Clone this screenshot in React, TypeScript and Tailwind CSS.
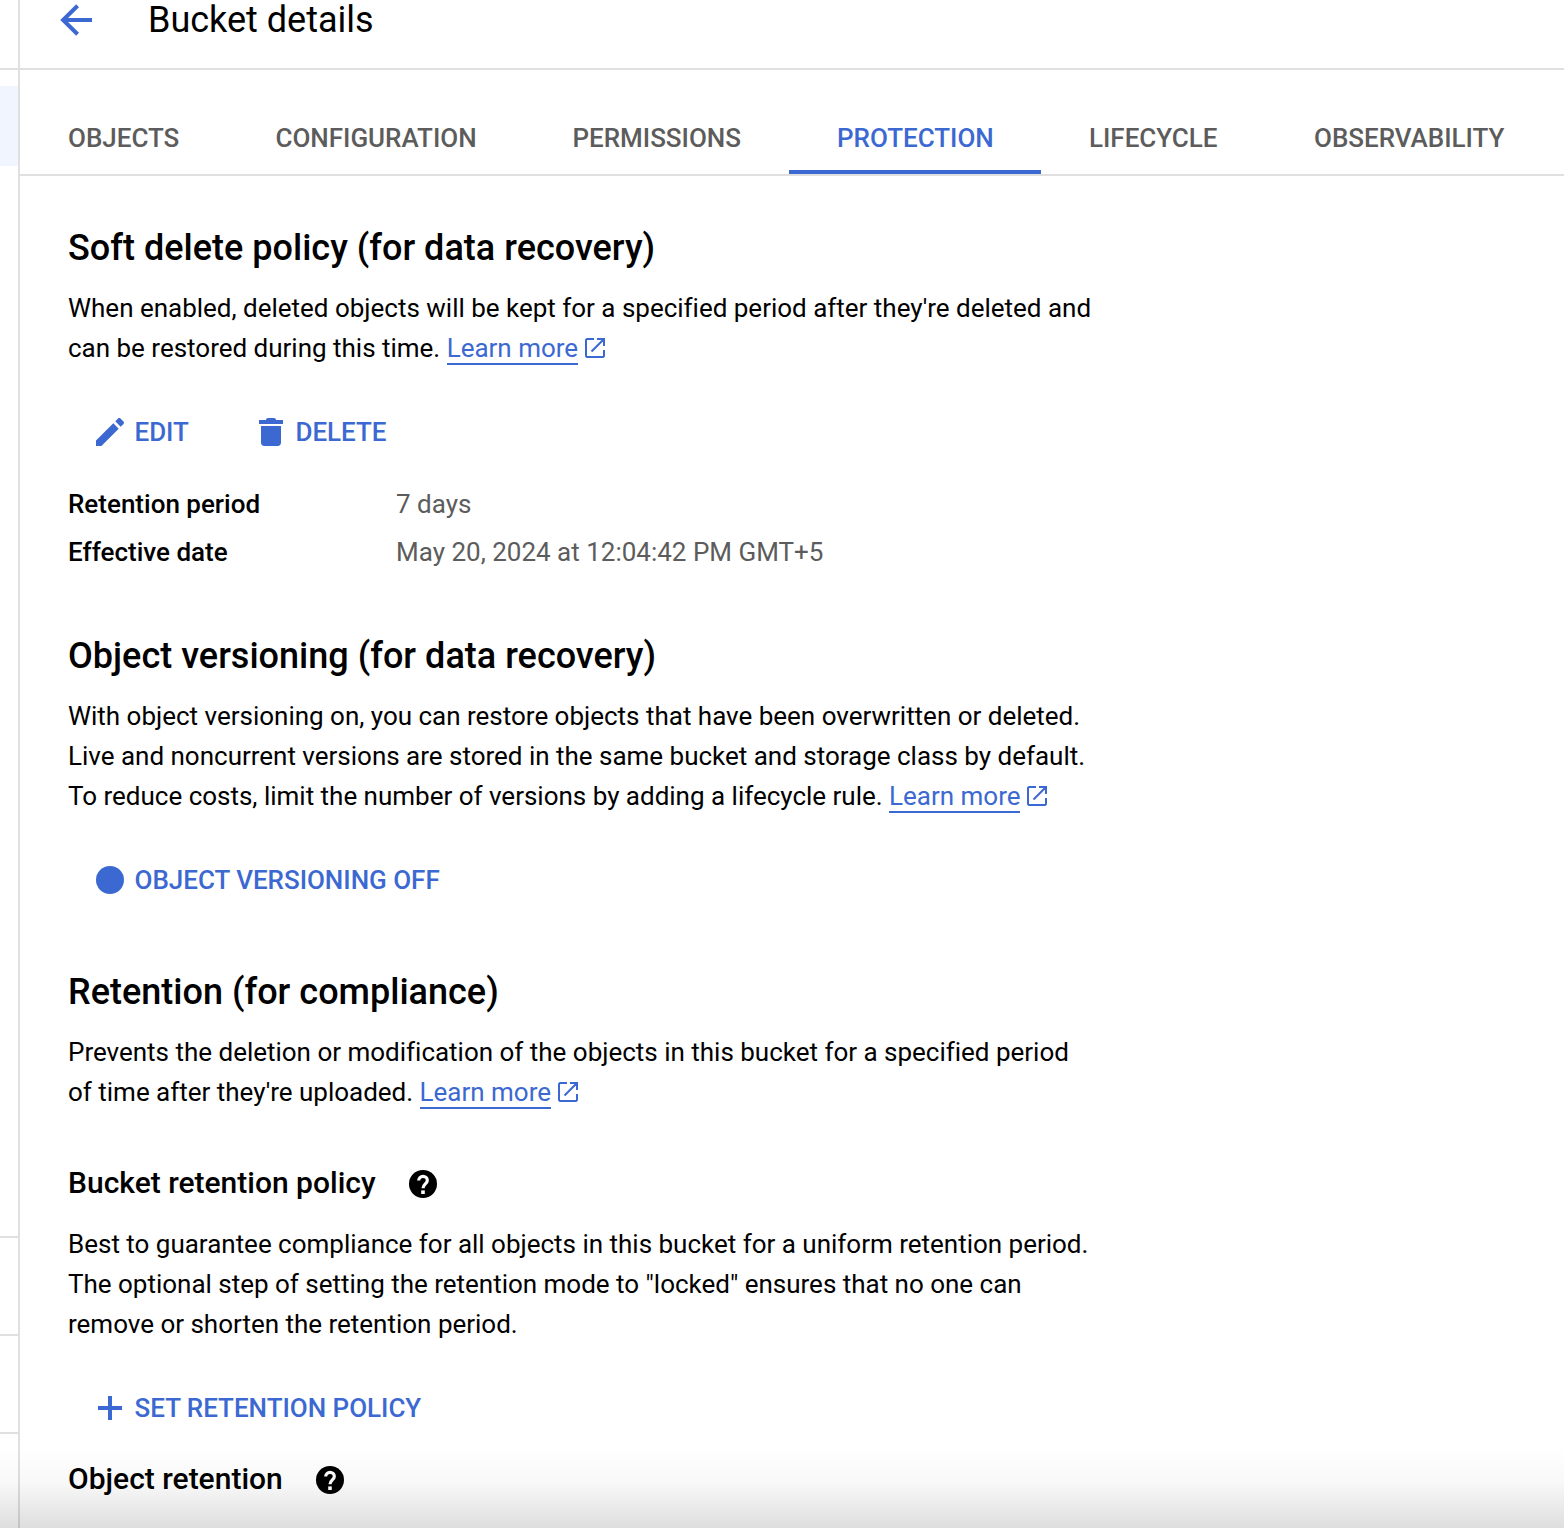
import React from "react";

function BackIcon() {
  return (
    <svg viewBox="0 0 32 32" className="size-8 shrink-0" fill="none" stroke="currentColor" strokeWidth="4">
      <path d="M17.6 1.8L3.1 16l14.5 14.2M3 16h29" />
    </svg>
  );
}

function EditIcon() {
  return (
    <svg viewBox="0 0 18 18" className="ml-6 mr-[6.5px] size-9 shrink-0" fill="currentColor">
      <path d="M2 13.3V16h2.7l8.65-8.65-2.7-2.7zM11.65 3.65l2.7 2.7 1.4-1.4c.33-.33.33-.85 0-1.18l-1.52-1.52c-.33-.33-.85-.33-1.18 0z" />
    </svg>
  );
}

function TrashIcon() {
  return (
    <svg viewBox="0 0 18 18" className="ml-16 mr-[6.5px] size-9 shrink-0" fill="currentColor">
      <path d="M4 6h10v8.4c0 .9-.7 1.6-1.6 1.6H5.6C4.700 16 4 15.300 4 14.400zM3 3h3.500c0-.6.4-1 1-1h3c.6 0 1 .4 1 1H15v2H3z" />
    </svg>
  );
}

function OpenIcon() {
  return (
    <svg viewBox="0 0 20 20" className="ml-[7px] inline-block size-5 align-[-1px]" fill="none" stroke="currentColor" strokeWidth="2">
      <path d="M9 1H2L1 2v16l1 1h16l1-1v-6M12 1h7v7M18.500 1.500L6.500 13.500" />
    </svg>
  );
}

function HelpIcon() {
  return (
    <svg viewBox="0 0 28 28" className="ml-[33px] size-7 shrink-0">
      <circle cx="14" cy="14" r="14" fill="#000" />
      <path d="M9.700 10.600c0-2.500 1.900-4.200 4.300-4.200s4.300 1.700 4.300 4c0 3.400-4.300 3.700-4.300 7.900" fill="none" stroke="#fff" strokeWidth="3.200" />
      <rect x="12.200" y="20.400" width="3.600" height="3.600" fill="#fff" />
    </svg>
  );
}

function PlusIcon() {
  return (
    <svg viewBox="0 0 24 24" className="ml-[30px] mr-[12.5px] size-6 shrink-0" fill="currentColor">
      <path d="M10 0h4v10h10v4H14v10h-4V14H0v-4h10z" />
    </svg>
  );
}

const tabs = [
  ["OBJECTS", "w-[207.5px]"],
  ["CONFIGURATION", "w-[297px]"],
  ["PERMISSIONS", "w-[264.5px]"],
  ["PROTECTION", "w-[252px]"],
  ["LIFECYCLE", "w-[225px]"],
  ["OBSERVABILITY", "w-[286px]"],
];

function LearnMore() {
  return (
    <a className="text-[#3c69d1]">
      <span className="border-b-2 border-[#3c69d1]">Learn more</span>
      <OpenIcon />
    </a>
  );
}

function Title({ children }: { children: React.ReactNode }) {
  return (
    <h2 className="h-12 whitespace-nowrap text-[36px] font-medium leading-[48px] tracking-[0.015px]">{children}</h2>
  );
}

function Para({ children }: { children: React.ReactNode }) {
  return (
    <p className="mt-4 whitespace-nowrap text-[26px] leading-[40px] tracking-[-0.01px]">{children}</p>
  );
}

function Subheading({ children }: { children: React.ReactNode }) {
  return (
    <h3 className="flex h-10 items-center text-[30px] font-medium">
      <span className="pb-1">{children}</span>
      <HelpIcon />
    </h3>
  );
}

function Action({ children, label }: { children: React.ReactNode; label: string }) {
  return (
    <button className="flex h-12 items-center whitespace-nowrap text-[26px] font-medium tracking-[-0.02px] text-[#3c69d1]">
      {children}
      <span>{label}</span>
    </button>
  );
}

export default function App() {
  return (
    <div className="relative flex h-[1528px] w-[1564px] overflow-hidden bg-white font-['Roboto',sans-serif] text-black">
      <aside className="flex w-5 shrink-0 flex-col border-r-2 border-[#e0e0e0]">
        <div className="h-[70px] shrink-0 border-b-2 border-[#e0e0e0]" />
        <div className="mt-4 h-20 shrink-0 bg-[#f0f5ff]" />
        <div className="h-[1072px] shrink-0 border-b-2 border-[#e0e0e0]" />
        <div className="h-[98px] shrink-0 border-b-2 border-[#e0e0e0]" />
        <div className="h-[98px] shrink-0 border-b-2 border-[#e0e0e0]" />
      </aside>
      <main className="flex w-[1544px] flex-col">
        <header className="flex h-[70px] shrink-0 items-center border-b-2 border-[#e0e0e0] pb-[28px] pl-10 text-[#3c69d1]">
          <BackIcon />
          <h1 className="ml-14 text-[36px] leading-[40px] text-black">Bucket details</h1>
        </header>
        <nav className="flex h-[106px] shrink-0 items-end border-b-2 border-[#e0e0e0]">
          {tabs.map(([name, width]) => (
            <div
              key={name}
              className={
                "flex h-[74px] shrink-0 items-center whitespace-nowrap border-b-4 pl-12 pt-1.5 text-[26px] font-medium tracking-[-0.02px] " +
                width +
                (name === "PROTECTION" ? " border-[#3c69d1] text-[#3c69d1]" : " border-transparent text-[#5c5c5c]")
              }
            >
              {name}
            </div>
          ))}
        </nav>
        <div className="flex flex-col pl-12">
          <section className="mt-12 h-[408px]">
            <Title>Soft delete policy (for data recovery)</Title>
            <Para>
              When enabled, deleted objects will be kept for a specified period after they're deleted and
              <br />
              can be restored during this time. <LearnMore />
            </Para>
            <div className="mt-10 flex">
              <Action label="EDIT">
                <EditIcon />
              </Action>
              <Action label="DELETE">
                <TrashIcon />
              </Action>
            </div>
            <dl className="mt-6 grid grid-cols-[328px_auto] text-[26px] leading-[48px]">
              <dt className="font-medium">Retention period</dt>
              <dd className="text-[#5c5c5c]">7 days</dd>
              <dt className="font-medium">Effective date</dt>
              <dd className="text-[#5c5c5c]">May 20, 2024 at 12:04:42 PM GMT+5</dd>
            </dl>
          </section>
          <section className="h-[336px]">
            <Title>Object versioning (for data recovery)</Title>
            <Para>
              With object versioning on, you can restore objects that have been overwritten or deleted.
              <br />
              Live and noncurrent versions are stored in the same bucket and storage class by default.
              <br />
              To reduce costs, limit the number of versions by adding a lifecycle rule. <LearnMore />
            </Para>
            <div className="mt-10">
              <Action label="OBJECT VERSIONING OFF">
                <span className="ml-7 mr-[10.5px] size-7 rounded-full bg-[#3c69d1]" />
              </Action>
            </div>
          </section>
          <section>
            <Title>Retention (for compliance)</Title>
            <Para>
              Prevents the deletion or modification of the objects in this bucket for a specified period
              <br />
              of time after they're uploaded. <LearnMore />
            </Para>
            <div className="mt-[52px]">
              <Subheading>Bucket retention policy</Subheading>
            </div>
            <div className="pt-1">
              <Para>
                Best to guarantee compliance for all objects in this bucket for a uniform retention period.
                <br />
                The optional step of setting the retention mode to "locked" ensures that no one can
                <br />
                remove or shorten the retention period.
              </Para>
            </div>
            <div className="mt-10">
              <Action label="SET RETENTION POLICY">
                <PlusIcon />
              </Action>
            </div>
            <div className="mt-7">
              <Subheading>Object retention</Subheading>
            </div>
          </section>
        </div>
      </main>
      <div className="pointer-events-none absolute inset-x-0 bottom-0 h-20 bg-linear-to-b from-transparent via-black/[0.03] via-45% to-black/[0.13]" />
    </div>
  );
}
